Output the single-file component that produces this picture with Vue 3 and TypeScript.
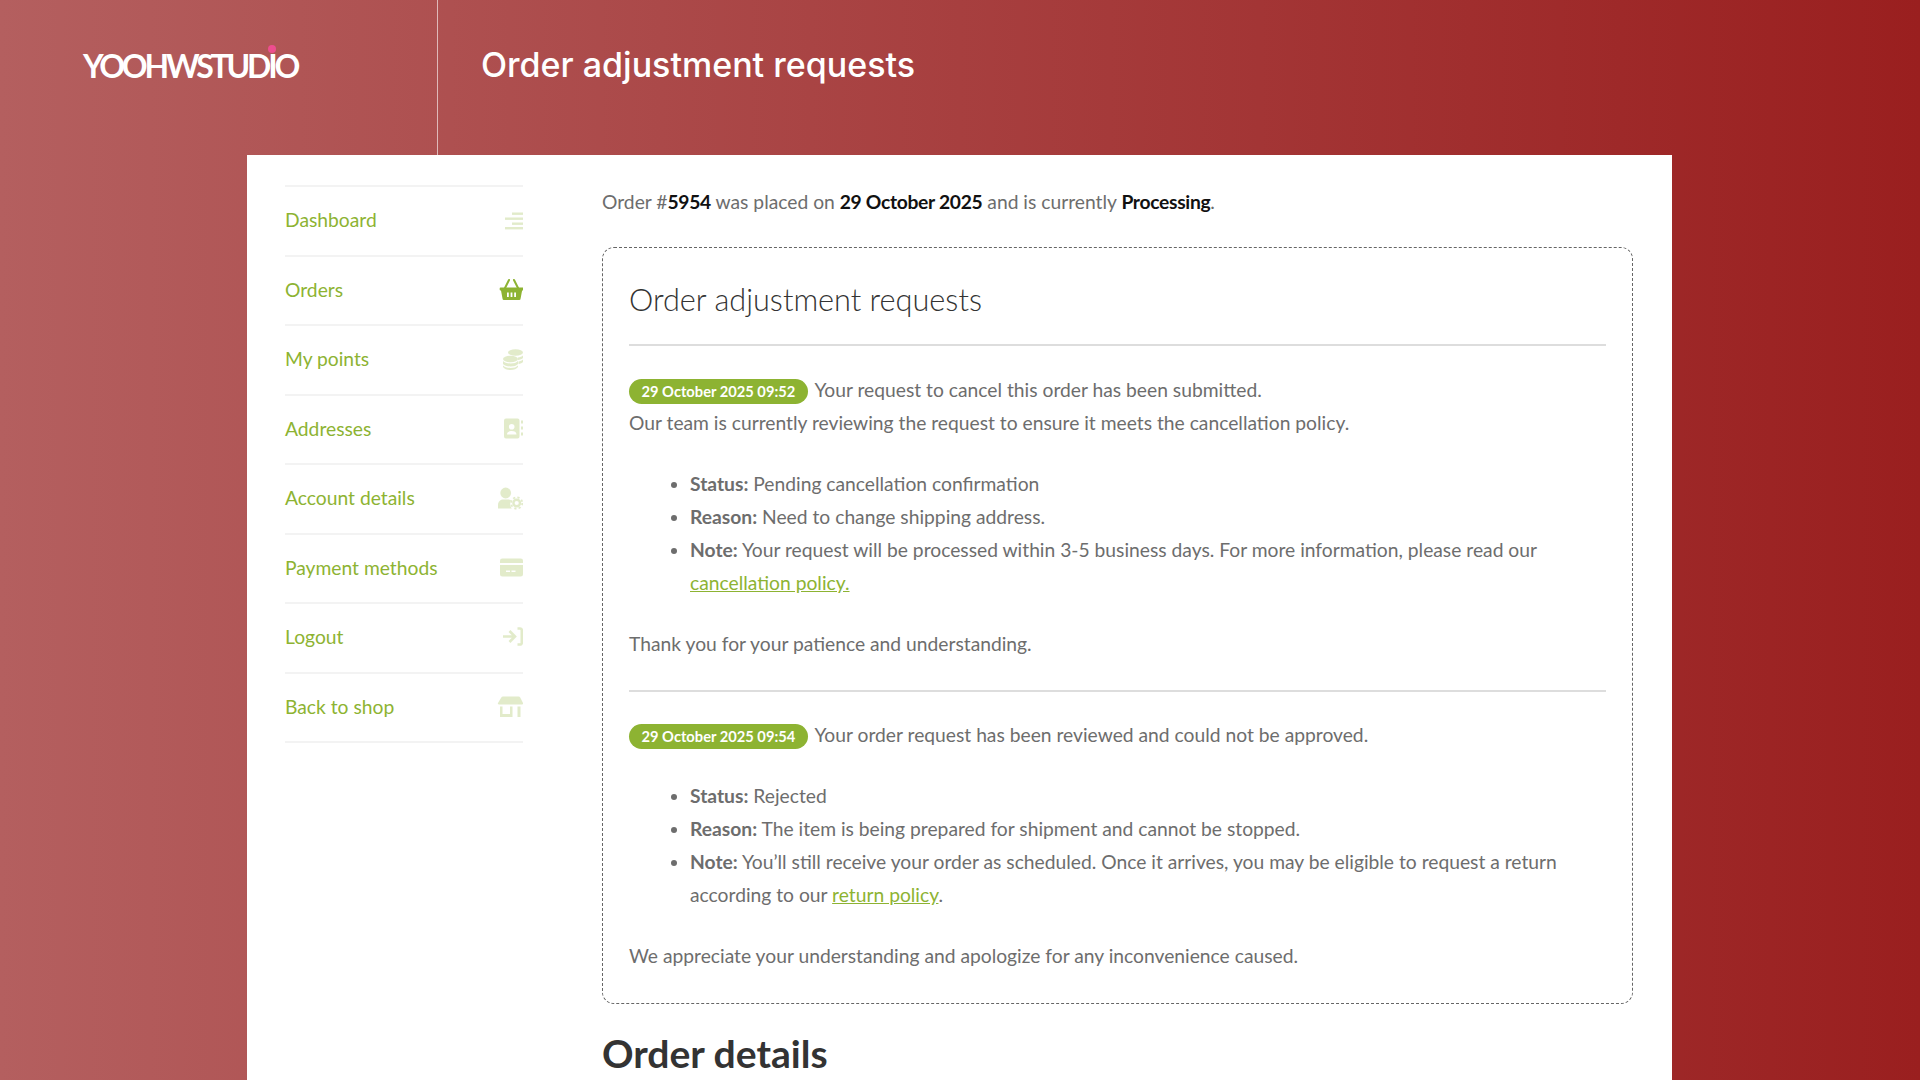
<script setup lang="ts">
const menu = [
  { label: 'Dashboard', icon: 'dash', active: false },
  { label: 'Orders', icon: 'basket', active: true },
  { label: 'My points', icon: 'coins', active: false },
  { label: 'Addresses', icon: 'book', active: false },
  { label: 'Account details', icon: 'user', active: false },
  { label: 'Payment methods', icon: 'card', active: false },
  { label: 'Logout', icon: 'logout', active: false },
  { label: 'Back to shop', icon: 'shop', active: false },
];
</script>

<template>
  <div class="page">
    <header class="top">
      <div class="brand">
        <span class="logo">YOOHWSTUDIO<i class="dot"></i></span>
      </div>
      <h1 class="title">Order adjustment requests</h1>
    </header>

    <main class="card">
      <nav class="side">
        <a v-for="m in menu" :key="m.label" class="row">
          <span class="label">{{ m.label }}</span>
          <svg class="ico" :class="{ on: m.active }" viewBox="0 0 26 24" width="26" height="24" fill="currentColor">
            <template v-if="m.icon === 'dash'">
              <rect x="15" y="3.500" width="11" height="2.400" />
              <rect x="8" y="8.500" width="18" height="2.400" />
              <rect x="15" y="13.500" width="11" height="2.400" />
              <rect x="8" y="18" width="18" height="2.400" />
            </template>
            <g v-else-if="m.icon === 'basket'">
              <path fill-rule="evenodd" d="M3.500 9.500h22a.8.8 0 0 1 .8.8v1.400a.8.8 0 0 1-.8.8h-.4l-1.500 8a1.500 1.500 0 0 1-1.500 1.500H7a1.500 1.500 0 0 1-1.500-1.500l-1.500-8h-.5a.8.8 0 0 1-.8-.8v-1.400a.8.8 0 0 1 .8-.8zM10 14.500v4.500h1.800v-4.500zm3.600 0v4.500h1.800v-4.500zm3.600 0v4.500H19v-4.500z" />
              <path d="M8 10l4-8M21 10l-4-8" fill="none" stroke="currentColor" stroke-width="2" stroke-linecap="round" />
            </g>
            <g v-else-if="m.icon === 'coins'">
              <ellipse cx="18.500" cy="4.500" rx="7.500" ry="3.300" />
              <path d="M21 9.500c2-.3 4-1 5-2v2.500c-1 1-3 1.700-5 2zM21.500 13.500c2-.3 3.500-1 4.500-2v2.500c-1 1-2.500 1.700-4.500 2z" />
              <ellipse cx="13.500" cy="11" rx="7.500" ry="3.300" />
              <path d="M6 13c1.500 1.700 4 2.500 7.500 2.500S19.500 14.700 21 13v3c-1.500 1.700-4 2.500-7.500 2.500S7.500 17.700 6 16zM6 17.500c1.500 1.700 4 2.500 7.500 2.500s6-.8 7.500-2.500V19c-1.500 2-4 3-7.500 3S7.500 21 6 19z" />
            </g>
            <g v-else-if="m.icon === 'book'">
              <path fill-rule="evenodd" d="M9 1.500h11.500a2 2 0 0 1 2 2v16a2 2 0 0 1-2 2H9a2 2 0 0 1-2-2v-16a2 2 0 0 1 2-2zm5.700 5.500a2.800 2.800 0 1 0 0 5.600 2.800 2.800 0 0 0 0-5.600zM10 17.500h9.500c0-2.500-2-3.500-4.700-3.500S10 15 10 17.500z" />
              <rect x="24" y="3.500" width="2" height="3" />
              <rect x="24" y="9.500" width="2" height="3" />
              <rect x="24" y="15.500" width="2" height="3" />
            </g>
            <g v-else-if="m.icon === 'user'">
              <circle cx="8.700" cy="6" r="5.400" />
              <path d="M1 21.500v-3.500c0-3.500 2.500-5.500 5.500-5.500h4.500c1.300 0 2.300.3 3 .8-1.300 2.500-1 6 .8 8.200z" />
              <circle cx="19.700" cy="16" r="3.300" fill="none" stroke="currentColor" stroke-width="2.400" />
              <circle cx="19.700" cy="16" r="5.600" fill="none" stroke="currentColor" stroke-width="1.800" stroke-dasharray="2.200 2.200" />
            </g>
            <g v-else-if="m.icon === 'card'">
              <path d="M5.500 2.500h18A2.500 2.500 0 0 1 26 5v2H3V5a2.500 2.500 0 0 1 2.500-2.500z" />
              <path fill-rule="evenodd" d="M3 9h23v9a2.500 2.500 0 0 1-2.500 2.500h-18A2.500 2.500 0 0 1 3 18zm6 5.500V16h4v-1.500zm5.500 0V16h4v-1.500z" />
            </g>
            <g v-else-if="m.icon === 'logout'" fill="none" stroke="currentColor" stroke-width="2.600">
              <path d="M6 10.500h12M12.500 5l5.500 5.500-5.500 5.500" />
              <path d="M20.500 2.500h2.500a1.800 1.800 0 0 1 1.800 1.800v12.400a1.800 1.800 0 0 1-1.800 1.800h-2.500" />
            </g>
            <g v-else>
              <path d="M6 1.500h15.500c.8 0 1.300.3 1.700 1L26 8a1 1 0 0 1-1 1.500H2A1 1 0 0 1 1 8l3.300-5.500c.4-.7 1-1 1.700-1z" />
              <path fill-rule="evenodd" d="M3 11.500h2.500V19h7.500v-7.500h2.500V22H3z" />
              <rect x="20.500" y="11.500" width="3" height="10.500" />
            </g>
          </svg>
        </a>
      </nav>

      <section class="content">
        <p class="intro">
          Order #<b>5954</b> was placed on <b>29 October 2025</b> and is currently <b>Processing</b>.
        </p>

        <div class="box">
          <h3>Order adjustment requests</h3>
          <hr />
          <p class="entry">
            <span class="stamp">29 October 2025 09:52</span> Your request to cancel this order has been submitted.<br />
            Our team is currently reviewing the request to ensure it meets the cancellation policy.
          </p>
          <ul>
            <li><strong>Status:</strong> Pending cancellation confirmation</li>
            <li><strong>Reason:</strong> Need to change shipping address.</li>
            <li><strong>Note:</strong> Your request will be processed within 3-5 business days. For more information, please read our <a>cancellation policy.</a></li>
          </ul>
          <p class="entry">Thank you for your patience and understanding.</p>
          <hr class="mid" />
          <p class="entry">
            <span class="stamp">29 October 2025 09:54</span> Your order request has been reviewed and could not be approved.
          </p>
          <ul>
            <li><strong>Status:</strong> Rejected</li>
            <li><strong>Reason:</strong> The item is being prepared for shipment and cannot be stopped.</li>
            <li><strong>Note:</strong> You’ll still receive your order as scheduled. Once it arrives, you may be eligible to request a return according to our <a>return policy</a>.</li>
          </ul>
          <p class="entry">We appreciate your understanding and apologize for any inconvenience caused.</p>
        </div>

        <h2 class="details">Order details</h2>
      </section>
    </main>
  </div>
</template>

<style>
html,
body {
  margin: 0;
  height: 100%;
  overflow: hidden;
}
</style>

<style scoped>
.page {
  height: 1080px;
  overflow: hidden;
  background: linear-gradient(90deg, #b45f5f 0%, #9a1f1f 100%);
  font-family: 'Lato', 'Noto Sans', sans-serif;
  font-size: 19.25px;
  line-height: 33px;
  color: #6d6d6d;
}
.top {
  height: 155px;
  display: flex;
}
.brand {
  width: 438px;
  border-right: 1px solid rgba(255, 255, 255, 0.6);
  padding: 46px 0 0 83px;
  box-sizing: border-box;
}
.logo {
  position: relative;
  display: inline-block;
  font-family: 'Lato', sans-serif;
  font-size: 32px;
  line-height: 40px;
  letter-spacing: -3.2px;
  font-weight: 700;
  color: #fff;
}
.dot {
  position: absolute;
  left: 185px;
  top: -1px;
  width: 8px;
  height: 8px;
  border-radius: 50%;
  background: #ee4d8f;
}
.title {
  margin: 43px 0 0 43px;
  font-family: 'Inter', sans-serif;
  font-size: 34px;
  line-height: 44px;
  font-weight: 500;
  color: #fff;
}
.card {
  width: 1425px;
  height: 925px;
  margin-left: 247px;
  background: #fff;
  display: flex;
  box-sizing: border-box;
  padding: 30px 39px 0 38px;
}
.side {
  width: 238px;
  flex: none;
  border-top: 2px solid #f3f3f3;
  align-self: flex-start;
}
.row {
  height: 69.5px;
  box-sizing: border-box;
  border-bottom: 2px solid #f3f3f3;
  display: flex;
  align-items: center;
  justify-content: space-between;
  color: #8db332;
}
.label {
  margin-top: -2px;
}
.ico {
  color: #8db332;
  opacity: 0.25;
}
.ico.on {
  opacity: 1;
}
.content {
  margin-left: 79px;
  flex: 1;
  min-width: 0;
}
.intro {
  margin: 0;
}
.intro b {
  color: #111;
  font-weight: 700;
  letter-spacing: -0.3px;
}
.box {
  margin-top: 29px;
  border: 1px dashed #666;
  border-radius: 12px;
  padding: 29px 26px 31px;
  height: 757px;
  box-sizing: border-box;
}
h3 {
  margin: 0;
  font-size: 30.7px;
  line-height: 46px;
  font-weight: 300;
  color: #333;
}
hr {
  border: 0;
  border-top: 2px solid #ddd;
  margin: 21px 0 27px;
}
hr.mid {
  margin: 30px 0 26px;
}
.entry {
  margin: 0;
}
.stamp {
  display: inline-block;
  height: 25px;
  line-height: 25px;
  padding: 0 12.5px;
  margin-right: 2.5px;
  border-radius: 13px;
  background: #8db332;
  color: #fff;
  font-size: 14.7px;
  font-weight: 700;
  vertical-align: 0;
}
ul {
  margin: 28px 0;
  padding-left: 61px;
}
strong {
  font-weight: 700;
}
li a {
  color: #8db332;
  text-decoration: underline;
}
.details {
  margin: 23px 0 0;
  font-size: 39.1px;
  line-height: 52px;
  font-weight: 700;
  color: #333;
}
</style>
